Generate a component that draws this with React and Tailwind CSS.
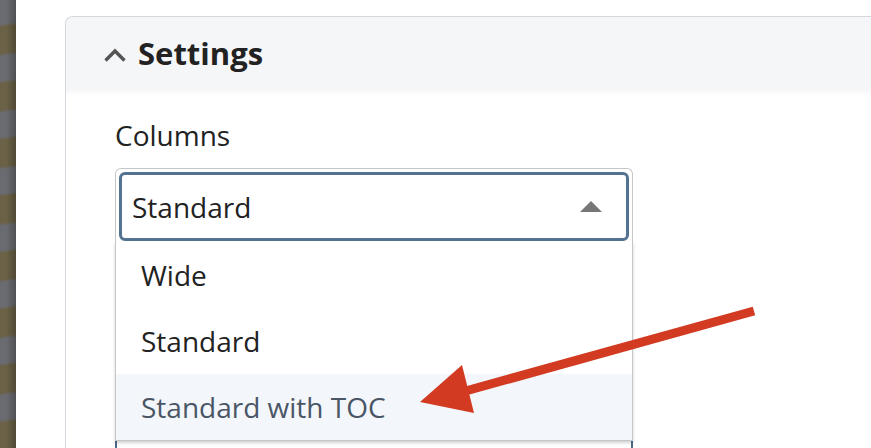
import React from "react";

export default function App() {
  return (
    <div className="relative flex h-[448px] w-[871px] items-start overflow-hidden bg-white font-['Open_Sans',sans-serif] text-[#242424]">
      {/* left strip */}
      <div className="relative h-full w-[16px] shrink-0 bg-[repeating-linear-gradient(172deg,#6a6b70_0px,#6a6b70_24px,#6a6146_27px,#6a6146_53px,#6a6b70_56px)]">
        <div className="absolute inset-0 bg-[linear-gradient(90deg,rgba(0,0,0,0)_40%,rgba(0,0,0,0.25)_100%)]" />
      </div>

      {/* card */}
      <div className="ml-[49px] mt-[16px] flex w-[900px] shrink-0 flex-col rounded-tl-[8px] border-l border-t border-[#d6d7de]">
        <div className="flex h-[73px] shrink-0 items-center rounded-tl-[8px] bg-[#f5f6f8] pl-[37px]">
          <svg width="24" height="16" viewBox="0 0 24 16" className="mt-[2px]">
            <path d="M2.5 13.5 L12 4 L21.5 13.5" fill="none" stroke="#555" strokeWidth="3.4" />
          </svg>
          <span className="ml-[11px] text-[31px] font-bold leading-none text-[#222]">Settings</span>
        </div>
        <div className="h-[6px] shrink-0 bg-[linear-gradient(180deg,#f7f7f8,#ffffff)]" />

        <div className="relative flex shrink-0 flex-col pl-[49px]">
          <div className="mt-[21px] text-[28px] leading-[36px] text-[#222]">Columns</div>

          {/* select control */}
          <div className="relative mt-[15px] w-[518px]">
            <div className="rounded-t-[6px] border border-b-0 border-[#c6c6c6] p-[3px] pb-0">
              <div className="flex h-[69px] items-center justify-between rounded-[6px] border-[3px] border-[#547291] pl-[10px] pr-[24px]">
                <span className="text-[28px] text-[#222]">Standard</span>
                <svg width="22" height="11" viewBox="0 0 22 11">
                  <path d="M0 11 L11 0 L22 11 Z" fill="#777" />
                </svg>
              </div>
            </div>

            {/* next field behind the list */}
            <div className="mt-[130px] h-[140px] w-[518px] rounded-[6px] border-2 border-[#4d6a87]" />

            {/* dropdown list */}
            <div className="absolute left-0 top-[73px] z-10 flex w-[518px] flex-col border border-t-0 border-[#c6c6c6] bg-white shadow-[0_2px_3px_rgba(0,0,0,0.18)]">
              <div className="flex h-[67px] items-center pl-[25px] text-[28px] text-[#222]">Wide</div>
              <div className="flex h-[66px] items-center pl-[25px] text-[28px] text-[#222]">Standard</div>
              <div className="flex h-[66px] items-center bg-[#f3f7fb] pl-[25px] text-[28px] text-[#4a5665]">Standard with TOC</div>
            </div>
          </div>
        </div>
      </div>

      {/* red arrow annotation */}
      <svg className="pointer-events-none absolute left-0 top-0 z-20" width="871" height="448" viewBox="0 0 871 448">
        <line x1="754" y1="311" x2="462" y2="392" stroke="#d23a22" strokeWidth="9" />
        <polygon points="420,402 462,365 474,413" fill="#d23a22" />
      </svg>
    </div>
  );
}
